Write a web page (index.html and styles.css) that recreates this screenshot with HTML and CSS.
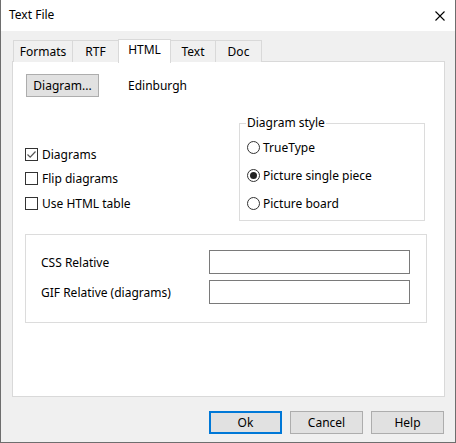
FILE: index.html
```html
<!DOCTYPE html>
<html>
<head>
<meta charset="utf-8">
<link rel="stylesheet" href="styles.css">
</head>
<body>
<div class="window">
  <div class="titlebar">
    <span class="title">Text File</span>
    <svg class="close" width="10" height="10" viewBox="0 0 10 10"><path d="M0.5 0.5L9.5 9.5M9.5 0.5L0.5 9.5" stroke="#000" stroke-width="1.1" fill="none"/></svg>
  </div>
  <div class="content">
    <div class="tabs">
      <div class="tab t-formats">Formats</div>
      <div class="tab t-rtf">RTF</div>
      <div class="tab t-html active">HTML</div>
      <div class="tab t-text">Text</div>
      <div class="tab t-doc">Doc</div>
    </div>
    <div class="panel">
      <div class="row-top">
        <div class="btn btn-diagram">Diagram...</div>
        <span class="city">Edinburgh</span>
      </div>
      <div class="row-mid">
        <div class="checks">
          <div class="check"><span class="cbox"><svg width="11" height="11" viewBox="0 0 11 11"><path d="M1.5 5.5L4.2 8.2L9.5 2.5" stroke="#555" stroke-width="1.2" fill="none"/></svg></span>Diagrams</div>
          <div class="check"><span class="cbox"></span>Flip diagrams</div>
          <div class="check"><span class="cbox"></span>Use HTML table</div>
        </div>
        <fieldset class="group style-group">
          <legend>Diagram style</legend>
          <div class="radio"><span class="rcircle"></span>TrueType</div>
          <div class="radio"><span class="rcircle on"><span class="dot"></span></span>Picture single piece</div>
          <div class="radio"><span class="rcircle"></span>Picture board</div>
        </fieldset>
      </div>
      <div class="group paths">
        <div class="field"><span class="flabel">CSS Relative</span><span class="input"></span></div>
        <div class="field"><span class="flabel">GIF Relative (diagrams)</span><span class="input"></span></div>
      </div>
    </div>
    <div class="buttons">
      <div class="btn btn-ok">Ok</div>
      <div class="btn">Cancel</div>
      <div class="btn">Help</div>
    </div>
  </div>
</div>
</body>
</html>
```
FILE: styles.css
```css
html, body {
  margin: 0;
  padding: 0;
  background: #f0f0f0;
}
body {
  font-family: "Noto Sans", "Liberation Sans", sans-serif;
  font-size: 12px;
  color: #000;
}
.window {
  width: 456px;
  height: 443px;
  box-sizing: border-box;
  border: 1px solid #6e6e6e;
  border-top: none;
  background: #f0f0f0;
}
.titlebar {
  height: 31px;
  background: #fff;
  display: flex;
  align-items: center;
  justify-content: space-between;
  padding: 0 10px 0 8px;
}
.title {
  line-height: 16px;
  margin-top: -1px;
}
.close {
  display: block;
}
.content {
  padding: 8px 11px 0 11px;
}
.tabs {
  display: flex;
  align-items: flex-end;
  height: 23px;
  margin-left: 1px;
  position: relative;
  z-index: 1;
}
.tab {
  box-sizing: border-box;
  height: 22px;
  border: 1px solid #d9d9d9;
  border-bottom: none;
  background: #f0f0f0;
  text-align: center;
  line-height: 20px;
  margin-right: -1px;
  padding-top: 1px;
}
.t-formats { width: 60px; }
.t-rtf { width: 47px; }
.t-html { width: 53px; }
.t-text { width: 46px; }
.t-doc { width: 47px; }
.tab.active {
  height: 24px;
  background: #fff;
  margin-bottom: -1px;
  line-height: 20px;
  padding-top: 0;
}
.panel {
  box-sizing: border-box;
  width: 433px;
  height: 336px;
  margin-top: -1px;
  background: #fff;
  border: 1px solid #d9d9d9;
  padding: 12px 16px 0 12px;
}
.row-top {
  display: flex;
  align-items: center;
}
.btn {
  box-sizing: border-box;
  width: 73px;
  height: 23px;
  background: #e1e1e1;
  border: 1px solid #adadad;
  display: flex;
  align-items: center;
  justify-content: center;
}
.btn-diagram {
  margin-left: 1px;
  width: 73px;
}
.city {
  margin-left: 29px;
}
.row-mid {
  display: flex;
  align-items: flex-start;
  margin-top: 18px;
}
.checks {
  width: 214px;
  padding-top: 27px;
}
.check {
  display: flex;
  align-items: center;
  height: 24.5px;
}
.cbox {
  box-sizing: border-box;
  width: 13px;
  height: 13px;
  border: 1px solid #333;
  margin-right: 4px;
  display: flex;
  align-items: center;
  justify-content: center;
  background: #fff;
}
.cbox svg { display: block; }
.group {
  border: 1px solid #dcdcdc;
}
fieldset.style-group {
  margin: 0;
  width: 186px;
  height: 106px;
  box-sizing: border-box;
  padding: 2px 0 0 7px;
}
legend {
  padding: 0 1px;
  margin-left: -1px;
  line-height: 16px;
}
.radio {
  display: flex;
  align-items: center;
  height: 28px;
}
.rcircle {
  box-sizing: border-box;
  width: 13px;
  height: 13px;
  border: 1px solid #333;
  border-radius: 50%;
  margin-right: 3px;
  display: flex;
  align-items: center;
  justify-content: center;
}
.dot {
  width: 7px;
  height: 7px;
  border-radius: 50%;
  background: #222;
}
.paths {
  box-sizing: border-box;
  width: 402px;
  height: 89px;
  margin-top: 13px;
  padding: 15px 0 0 15px;
}
.field {
  display: flex;
  align-items: center;
  height: 24px;
  margin-bottom: 6px;
}
.flabel {
  width: 168px;
}
.input {
  box-sizing: border-box;
  width: 201px;
  height: 24px;
  border: 1px solid #7a7a7a;
  background: #fff;
}
.buttons {
  display: flex;
  justify-content: flex-end;
  gap: 8px;
  margin-top: 14px;
}
.btn-ok {
  border: 2px solid #0078d7;
}
```
